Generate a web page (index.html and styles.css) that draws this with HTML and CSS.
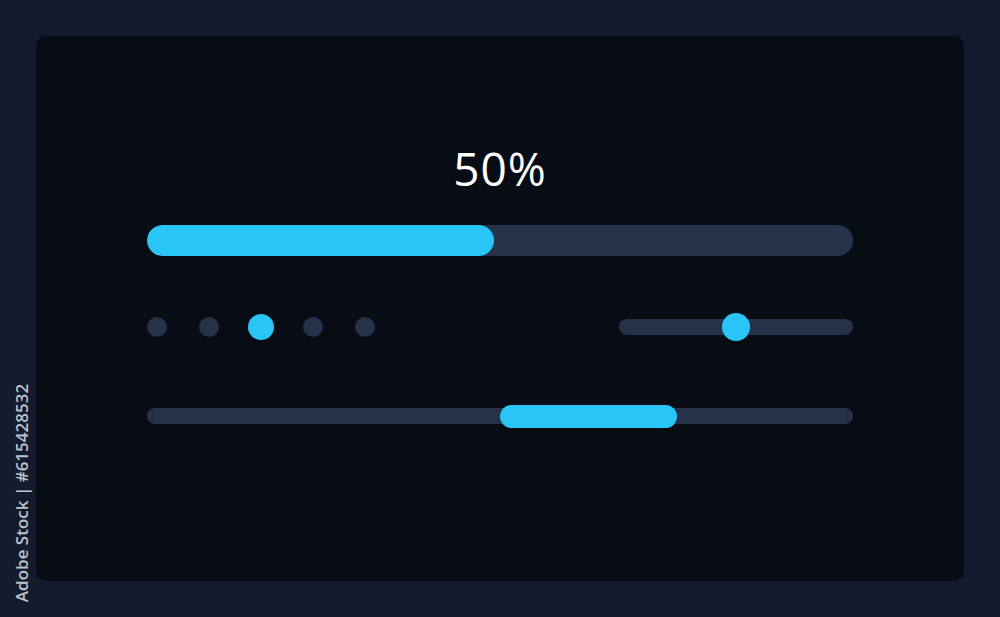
FILE: index.html
```html
<!DOCTYPE html>
<html lang="en">
<head>
    <meta charset="UTF-8">
    <meta name="viewport" content="width=device-width, initial-scale=1.0">
    <title>Progress UI</title>
    <link rel="stylesheet" href="styles.css">
</head>
<body>

    <!-- stock id along the left edge -->
    <div class="stock-id">Adobe Stock | #615428532</div>

    <div class="panel">

        <!-- percent -->
        <h1 class="percent">50%</h1>

        <!-- main progress bar -->
        <div class="bar">
            <div class="bar-fill"></div>
        </div>

        <!-- pager dots + slider -->
        <div class="controls">
            <div class="dots">
                <span class="dot"></span>
                <span class="dot"></span>
                <span class="dot active"></span>
                <span class="dot"></span>
                <span class="dot"></span>
            </div>

            <div class="slider">
                <span class="knob"></span>
            </div>
        </div>

        <!-- scroll track -->
        <div class="scroll">
            <span class="thumb"></span>
        </div>

    </div>

</body>
</html>
```

FILE: styles.css
```css
body {
    margin: 0;
    padding: 36px;
    height: 617px;
    box-sizing: border-box;
    background-color: #131b2e;
    font-family: 'Open Sans', 'DejaVu Sans', sans-serif;
    position: relative;
    overflow: hidden;
}

/* dark card */
.panel {
    height: 545px;
    box-sizing: border-box;
    background-color: #080c15;
    border-radius: 10px;
    padding: 104px 111px 0;
}

.percent {
    margin: 0;
    color: #fff;
    font-weight: 400;
    font-size: 46px;
    line-height: 56px;
    text-align: center;
    letter-spacing: 1px;
}

/* progress bar */
.bar {
    margin-top: 29px;
    height: 31px;
    border-radius: 16px;
    background-color: #253249;
    overflow: hidden;
}

.bar-fill {
    width: 49.2%;
    height: 100%;
    border-radius: 16px;
    background-color: #29c5f6;
}

.controls {
    margin-top: 57px;
    height: 28px;
    display: flex;
    justify-content: space-between;
    align-items: center;
}

.dots {
    display: flex;
    align-items: center;
    gap: 26px;
    margin-left: -3px;
}

.dot {
    width: 26px;
    height: 26px;
    display: flex;
    align-items: center;
    justify-content: center;
}

.dot::before {
    content: "";
    width: 20px;
    height: 20px;
    border-radius: 50%;
    background-color: #253249;
}

.dot.active::before {
    width: 26px;
    height: 26px;
    background-color: #29c5f6;
}

/* small slider on the right */
.slider {
    position: relative;
    width: 234px;
    height: 16px;
    border-radius: 8px;
    background-color: #253249;
}

.knob {
    position: absolute;
    left: 50%;
    top: 50%;
    width: 28px;
    height: 28px;
    margin: -14px 0 0 -14px;
    border-radius: 50%;
    background-color: #29c5f6;
}

/* bottom track */
.scroll {
    position: relative;
    margin-top: 67px;
    height: 16px;
    border-radius: 8px;
    background-color: #253249;
}

.thumb {
    position: absolute;
    left: 50%;
    top: -3px;
    width: 177px;
    height: 23px;
    border-radius: 12px;
    background-color: #29c5f6;
}

/* vertical id text */
.stock-id {
    position: absolute;
    left: 22px;
    top: 493px;
    transform: translate(-50%, -50%) rotate(-90deg);
    white-space: nowrap;
    color: #bcc1ca;
    font-family: 'Open Sans', sans-serif;
    font-weight: 600;
    font-size: 17px;
    line-height: 20px;
}
```
